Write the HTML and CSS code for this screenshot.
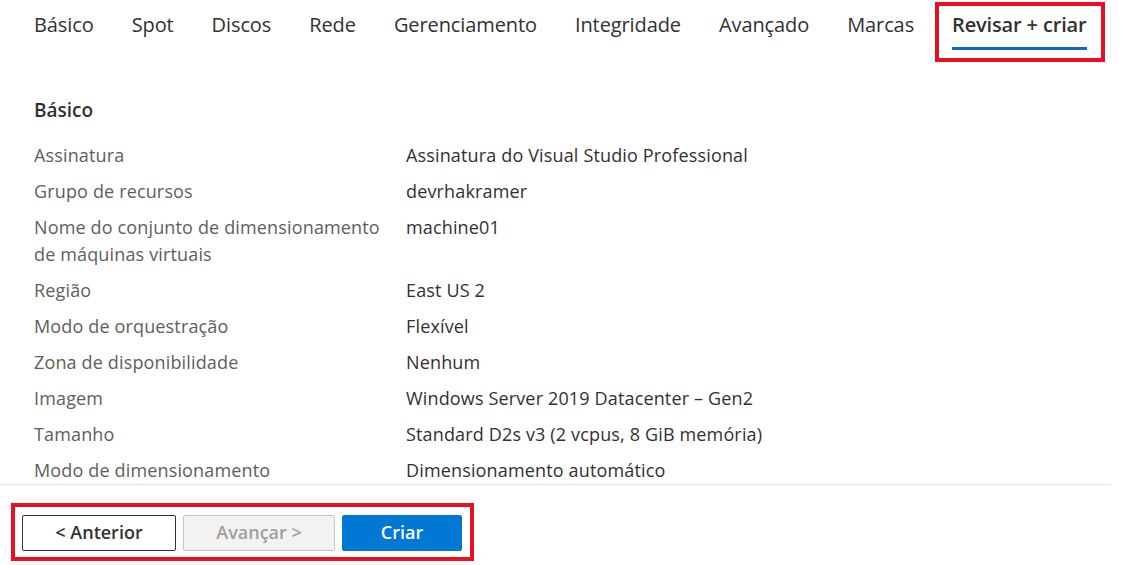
FILE: index.html
```html
<!DOCTYPE html>
<html lang="pt-BR">
<head>
<meta charset="utf-8">
<title>Revisar + criar</title>
<link rel="stylesheet" href="styles.css">
</head>
<body>
<div class="page">
  <nav class="tabs">
    <div class="tab"><span class="tab-label">Básico</span></div>
    <div class="tab"><span class="tab-label">Spot</span></div>
    <div class="tab"><span class="tab-label">Discos</span></div>
    <div class="tab"><span class="tab-label">Rede</span></div>
    <div class="tab"><span class="tab-label">Gerenciamento</span></div>
    <div class="tab"><span class="tab-label">Integridade</span></div>
    <div class="tab"><span class="tab-label">Avançado</span></div>
    <div class="tab"><span class="tab-label">Marcas</span></div>
    <div class="tab tab-active"><span class="tab-label">Revisar + criar</span></div>
  </nav>
  <main class="content">
    <h2 class="section-title">Básico</h2>
    <dl class="summary">
      <dt>Assinatura</dt><dd>Assinatura do Visual Studio Professional</dd>
      <dt>Grupo de recursos</dt><dd>devrhakramer</dd>
      <dt>Nome do conjunto de dimensionamento de máquinas virtuais</dt><dd>machine01</dd>
      <dt>Região</dt><dd>East US 2</dd>
      <dt>Modo de orquestração</dt><dd>Flexível</dd>
      <dt>Zona de disponibilidade</dt><dd>Nenhum</dd>
      <dt>Imagem</dt><dd>Windows Server 2019 Datacenter – Gen2</dd>
      <dt>Tamanho</dt><dd>Standard D2s v3 (2 vcpus, 8 GiB memória)</dd>
      <dt>Modo de dimensionamento</dt><dd>Dimensionamento automático</dd>
    </dl>
  </main>
  <footer class="footer">
    <div class="actions">
      <button class="btn btn-default" type="button">&lt; Anterior</button>
      <button class="btn btn-disabled" type="button" disabled>Avançar &gt;</button>
      <button class="btn btn-primary" type="button">Criar</button>
    </div>
  </footer>
</div>
</body>
</html>
```

FILE: styles.css
```css
* { box-sizing: border-box; }
html, body { margin: 0; padding: 0; background: #ffffff; }
body {
  font-family: "Open Sans", "Noto Sans", "Liberation Sans", sans-serif;
  color: #323130;
  width: 1128px;
  height: 565px;
  overflow: hidden;
}
.page { display: flex; flex-direction: column; height: 565px; }

.tabs {
  display: flex;
  padding: 2px 0 0 15px;
  height: 62px;
  flex: none;
}
.tab {
  height: 60px;
  padding: 9px 19px 0 19px;
  font-size: 20px;
  line-height: 28px;
  color: #323130;
  letter-spacing: -0.1px;
  white-space: nowrap;
}
.tab-label { display: inline-block; padding-bottom: 8px; border-bottom: 3px solid transparent; }
.tab-active {
  outline: 4px solid #e81123;
  outline-offset: -4px;
  margin-left: 2px;
  padding-left: 17px;
  padding-right: 18px;
  font-weight: 600;
  letter-spacing: -0.15px;
}
.tab-active .tab-label { border-bottom-color: #0f6cbd; }

.content {
  height: 422px;
  overflow: hidden;
  padding: 35px 0 0 34px;
  flex: none;
}
.section-title {
  margin: 0 0 18px 0;
  font-size: 19px;
  line-height: 27px;
  font-weight: 600;
  color: #323130;
}
.summary {
  margin: 0;
  display: grid;
  grid-template-columns: 372px 1fr;
  row-gap: 9px;
  font-size: 18px;
  line-height: 27px;
  letter-spacing: 0.15px;
}
.summary dt { margin: 0; color: #605e5c; padding-right: 12px; }
.summary dd { margin: 0; color: #323130; }

.footer {
  flex: none;
  border-top: 1px solid #e1dfdd;
  width: 1111px;
  padding: 18px 0 0 11px;
}
.actions {
  display: inline-flex;
  gap: 7px;
  border: 4px solid #e81123;
  padding: 8px 8px 6px 7px;
}
.btn {
  height: 36px;
  border-radius: 2px;
  font-family: inherit;
  font-size: 18px;
  font-weight: 600;
  line-height: 24px;
  padding: 0 0 2px 0;
  cursor: pointer;
}
.btn-default { width: 154px; background: #ffffff; border: 1px solid #323130; color: #323130; }
.btn-disabled { width: 152px; background: #f3f2f1; border: 1px solid #c8c6c4; color: #a19f9d; cursor: default; }
.btn-primary { width: 120px; background: #0078d4; border: 1px solid #0078d4; color: #ffffff; }
```
